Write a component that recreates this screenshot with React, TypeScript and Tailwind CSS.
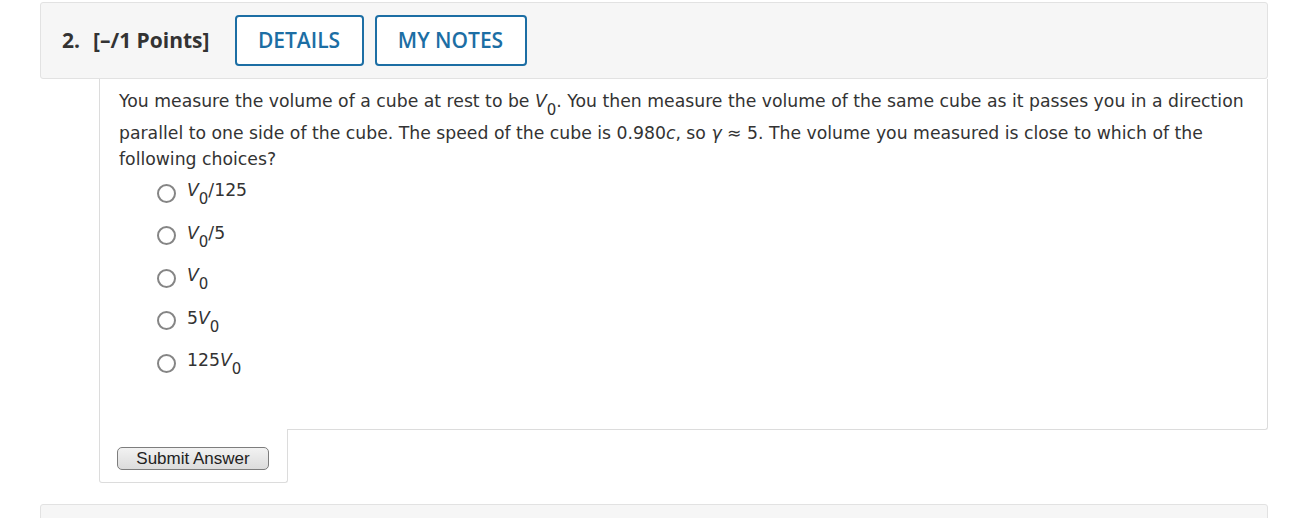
import React from "react";

const Sub = ({ children }: { children: React.ReactNode }) => (
  <span className="text-[15px] leading-[19px] align-[-8px] not-italic">{children}</span>
);

const V0 = () => (
  <>
    <i>V</i>
    <Sub>0</Sub>
  </>
);

const choices: React.ReactNode[] = [
  <><V0 />/125</>,
  <><V0 />/5</>,
  <><V0 /></>,
  <>5<V0 /></>,
  <>125<V0 /></>,
];

export default function App() {
  return (
    <div className="w-[1290px] h-[518px] overflow-hidden bg-white pt-[2px]">
      <div className="ml-[40px] w-[1228px]">
        <div
          className="h-[77px] flex items-center border border-[#e2e2e2] bg-[#f6f6f6] rounded-[3px] pl-[21px]"
          style={{ fontFamily: '"Open Sans", sans-serif' }}
        >
          <span className="text-[21px] font-bold text-[#333]">2.</span>
          <span className="ml-[13px] text-[21px] font-bold text-[#333]">[–/1 Points]</span>
          <div className="ml-[25px] flex gap-[11px]">
            <button className="h-[51px] w-[129px] border-2 border-[#1c6ea4] rounded-[4px] text-[21px] font-semibold text-[#1c6ea4] bg-white">
              DETAILS
            </button>
            <button className="h-[51px] w-[152px] border-2 border-[#1c6ea4] rounded-[4px] text-[21px] font-semibold text-[#1c6ea4] bg-white">
              MY NOTES
            </button>
          </div>
        </div>

        <div
          className="ml-[59px] h-[351px] border-x border-b border-[#dcdcdc] rounded-br-[3px] pl-[19px] pr-[15px] pt-[9px] text-[#333] text-[17.25px]"
          style={{ fontFamily: '"DejaVu Sans", Verdana, sans-serif' }}
        >
          <p className="leading-[26px]">
            You measure the volume of a cube at rest to be <V0 />. You then measure the volume of the
            same cube as it passes you in a direction parallel to one side of the cube. The speed of
            the cube is 0.980<i>c</i>, so <i>γ</i> ≈ 5. The volume you measured is close to which of
            the following choices?
          </p>
          <div className="ml-[38px] mt-0">
            {choices.map((c, i) => (
              <div key={i} className="h-[42.5px] flex items-center">
                <span className="w-[19px] h-[19px] rounded-full border-2 border-[#858585] bg-white shrink-0" />
                <span className="ml-[11px] leading-[26px]">{c}</span>
              </div>
            ))}
          </div>
        </div>

        <div className="ml-[59px] w-[189px] h-[54px] -mt-px border-x border-b border-[#dcdcdc] rounded-b-[3px] bg-white pt-[17px] pl-[17px]">
          <button
            className="h-[23px] w-[152px] rounded-[5px] border border-[#7d7d7d] bg-gradient-to-b from-[#f2f2f2] to-[#dcdcdc] text-[17px] leading-[21px] text-[#222]"
            style={{ fontFamily: '"Liberation Sans", Arial, sans-serif' }}
          >
            Submit Answer
          </button>
        </div>

        <div className="mt-[21px] h-[30px] border border-[#e2e2e2] bg-[#f6f6f6] rounded-[3px]" />
      </div>
    </div>
  );
}
